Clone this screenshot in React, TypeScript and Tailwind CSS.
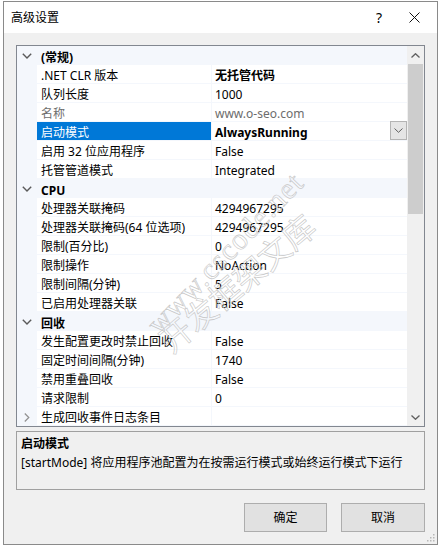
import React from 'react'

const font = 'font-["Segoe_UI","Noto_Sans","Noto_Sans_CJK_SC",sans-serif]'

type Row =
  | { kind: 'cat'; label: string; open: boolean }
  | { kind: 'prop'; label: string; value?: string; bold?: boolean; dim?: boolean; selected?: boolean; sub?: boolean }

const rows: Row[] = [
  { kind: 'cat', label: '(常规)', open: true },
  { kind: 'prop', label: '.NET CLR 版本', value: '无托管代码', bold: true },
  { kind: 'prop', label: '队列长度', value: '1000' },
  { kind: 'prop', label: '名称', value: 'www.o-seo.com', dim: true },
  { kind: 'prop', label: '启动模式', value: 'AlwaysRunning', bold: true, selected: true },
  { kind: 'prop', label: '启用 32 位应用程序', value: 'False' },
  { kind: 'prop', label: '托管管道模式', value: 'Integrated' },
  { kind: 'cat', label: 'CPU', open: true },
  { kind: 'prop', label: '处理器关联掩码', value: '4294967295' },
  { kind: 'prop', label: '处理器关联掩码(64 位选项)', value: '4294967295' },
  { kind: 'prop', label: '限制(百分比)', value: '0' },
  { kind: 'prop', label: '限制操作', value: 'NoAction' },
  { kind: 'prop', label: '限制间隔(分钟)', value: '5' },
  { kind: 'prop', label: '已启用处理器关联', value: 'False' },
  { kind: 'cat', label: '回收', open: true },
  { kind: 'prop', label: '发生配置更改时禁止回收', value: 'False' },
  { kind: 'prop', label: '固定时间间隔(分钟)', value: '1740' },
  { kind: 'prop', label: '禁用重叠回收', value: 'False' },
  { kind: 'prop', label: '请求限制', value: '0' },
  { kind: 'prop', label: '生成回收事件日志条目', sub: true },
]

function Chevron({ open }: { open: boolean }) {
  return open ? (
    <svg width="10" height="6" viewBox="0 0 10 6" className="text-[#5a5a5a]">
      <path d="M0.8 0.8 L5 5 L9.2 0.8" fill="none" stroke="currentColor" strokeWidth="1.4" />
    </svg>
  ) : (
    <svg width="6" height="9" viewBox="0 0 6 9" className="text-[#909090]">
      <path d="M0.8 0.5 L4.8 4.5 L0.8 8.5" fill="none" stroke="currentColor" strokeWidth="1.2" />
    </svg>
  )
}

function GridRow({ row }: { row: Row }) {
  if (row.kind === 'cat') {
    return (
      <div className="flex h-[19px] bg-[#f4f7fc]">
        <div className="flex w-[20px] items-center justify-center pt-[1px]">
          <Chevron open={row.open} />
        </div>
        <div className="relative top-[2px] pl-[4px] text-[12px] leading-[19px] font-bold text-black">{row.label}</div>
      </div>
    )
  }
  return (
    <div className="flex h-[19px]">
      <div className="flex w-[20px] items-center justify-center bg-[#f4f7fc] pt-[1px]">
        {row.sub ? <Chevron open={false} /> : null}
      </div>
      <div
        className={
          'w-[174px] shrink-0 border-b border-[#f4f7fc] pl-[4px] text-[12px] leading-[18px] whitespace-nowrap ' +
          (row.selected ? 'bg-[#0078d7] text-white' : row.dim ? 'text-[#6d6d6d]' : 'text-black')
        }
      >
        <span className="relative top-[2px]">{row.label}</span>
      </div>
      <div className="relative flex-1 border-b border-l border-[#f4f7fc] pl-[3px] text-[12px] leading-[18px] whitespace-nowrap">
        <span className={'relative top-[2px] ' + (row.bold ? 'font-bold ' : '') + (row.dim ? 'text-[#6d6d6d]' : 'text-black')}>
          {row.value}
        </span>
        {row.selected ? (
          <div className="absolute top-[-1px] right-[0px] flex h-[19px] w-[17px] items-center justify-center border border-[#b4b4b4] bg-[#e5e5e5]">
            <svg width="9" height="5" viewBox="0 0 9 5">
              <path d="M0.5 0.5 L4.5 4.3 L8.5 0.5" fill="none" stroke="#606060" strokeWidth="1" />
            </svg>
          </div>
        ) : null}
      </div>
    </div>
  )
}

function Scrollbar() {
  return (
    <div className="flex w-[17px] flex-col bg-[#f0f0f0]">
      <div className="flex h-[18px] items-center justify-center">
        <svg width="9" height="5" viewBox="0 0 9 5">
          <path d="M0.5 4.5 L4.5 0.7 L8.5 4.5" fill="none" stroke="#606060" strokeWidth="1.3" />
        </svg>
      </div>
      <div className="mx-[1px] h-[150px] bg-[#cdcdcd]" />
      <div className="flex-1" />
      <div className="flex h-[17px] items-center justify-center">
        <svg width="9" height="5" viewBox="0 0 9 5">
          <path d="M0.5 0.5 L4.5 4.3 L8.5 0.5" fill="none" stroke="#606060" strokeWidth="1.3" />
        </svg>
      </div>
    </div>
  )
}

export default function App() {
  return (
    <div className={'relative h-[548px] w-[441px] overflow-hidden bg-white pt-[1px] pl-[3px] ' + font}>
      <div className="flex h-[544px] w-[435px] flex-col border border-[#8a8a8a] bg-[#f0f0f0]">
        {/* title bar */}
        <div className="flex h-[31px] items-center bg-white">
          <span className="pl-[7px] text-[12px] text-black">高级设置</span>
          <span className="ml-auto pr-[27px] text-[14px] text-black">?</span>
          <svg width="11" height="11" viewBox="0 0 11 11" className="mr-[17px]">
            <path d="M0.5 0.5 L10.5 10.5 M10.5 0.5 L0.5 10.5" stroke="#111" strokeWidth="1" />
          </svg>
        </div>

        <div className="flex flex-1 flex-col px-[12px] pt-[12px]">
          {/* property grid */}
          <div className="flex h-[382px] border border-[#828790] bg-white">
            <div className="flex-1">
              {rows.map((r, i) => (
                <GridRow key={i} row={r} />
              ))}
            </div>
            <Scrollbar />
          </div>

          {/* description */}
          <div className="mt-[4px] h-[59px] border border-[#a0a0a0] bg-[#f0f0f0] px-[4px] pt-[2px]">
            <div className="text-[12px] leading-[19px] font-bold text-black">启动模式</div>
            <div className="text-[12px] leading-[19px] text-black">[startMode] 将应用程序池配置为在按需运行模式或始终运行模式下运行</div>
          </div>

          {/* buttons */}
          <div className="mt-[13px] flex justify-end gap-[14px]">
            <button className="h-[29px] w-[83px] border border-[#adadad] bg-[#e1e1e1] text-[12px] text-black">确定</button>
            <button className="h-[29px] w-[84px] border border-[#adadad] bg-[#e1e1e1] text-[12px] text-black">取消</button>
          </div>
        </div>

        {/* resize grip */}
        <div className="flex justify-end pr-[2px] pb-[2px]">
          <svg width="8" height="8" viewBox="0 0 8 8">
            <rect x="6" y="0" width="1.5" height="1.5" fill="#b8b8b8" />
            <rect x="3" y="3" width="1.5" height="1.5" fill="#b8b8b8" />
            <rect x="6" y="3" width="1.5" height="1.5" fill="#b8b8b8" />
            <rect x="0" y="6" width="1.5" height="1.5" fill="#b8b8b8" />
            <rect x="3" y="6" width="1.5" height="1.5" fill="#b8b8b8" />
            <rect x="6" y="6" width="1.5" height="1.5" fill="#b8b8b8" />
          </svg>
        </div>
      </div>

      {/* watermark */}
      <span className="pointer-events-none absolute top-[236px] left-[120px] rotate-[-46deg] text-[30px] leading-[34px] tracking-[1px] whitespace-nowrap text-transparent [-webkit-text-stroke:0.6px_#c4c4c4] font-['Liberation_Serif',serif]">
        www.cscode.net
      </span>
      <span className="pointer-events-none absolute top-[262px] left-[140px] rotate-[-40deg] text-[32px] leading-[40px] whitespace-nowrap text-transparent [-webkit-text-stroke:0.6px_#c4c4c4] font-['Noto_Sans_CJK_SC',sans-serif]">
        开发框架文库
      </span>
    </div>
  )
}
